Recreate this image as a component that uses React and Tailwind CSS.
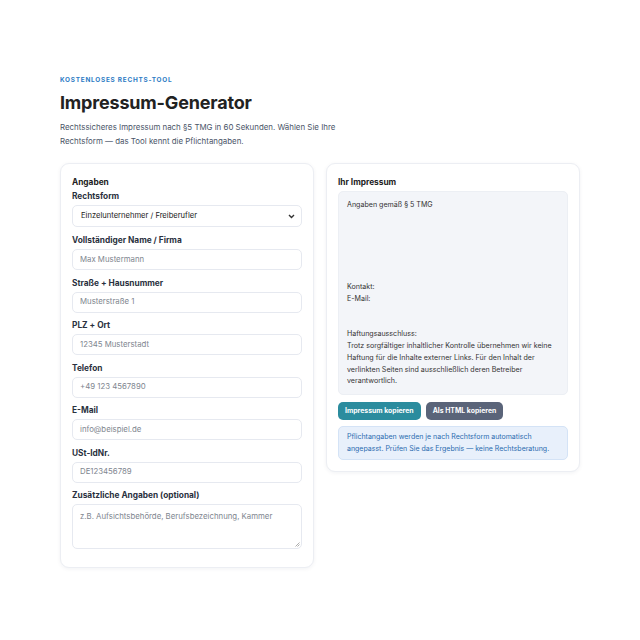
import React from "react";

const Field = ({ label, placeholder }) => (
  <div className="flex flex-col">
    <label className="text-[8.3px] font-bold text-[#2a3140] leading-[10px] mb-[4px]">{label}</label>
    <div className="h-[21px] rounded-[5px] border border-[#e6e9f0] bg-white flex items-center px-[7px] text-[7.8px] text-[#80868f]">
      {placeholder}
    </div>
  </div>
);

export default function App() {
  const pre = `Angaben gemäß § 5 TMG






Kontakt:
E-Mail:


Haftungsausschluss:
Trotz sorgfältiger inhaltlicher Kontrolle übernehmen wir keine Haftung für die Inhalte externer Links. Für den Inhalt der verlinkten Seiten sind ausschließlich deren Betreiber verantwortlich.`;
  return (
    <div className="min-h-[640px] bg-white" style={{ fontFamily: "Inter, 'Noto Sans', sans-serif" }}>
      <div className="w-[520px] ml-[60px] pt-[76px]">
        <div className="text-[6.4px] font-bold tracking-[0.12em] text-[#2b7bc4] leading-[9px]">KOSTENLOSES RECHTS-TOOL</div>
        <h1 className="mt-[6px] text-[18px] font-bold text-[#222] leading-[24px] tracking-[-0.01em]">Impressum-Generator</h1>
        <p className="mt-[5px] w-[290px] text-[7.9px] leading-[14px] text-[#4a5568]">
          Rechtssicheres Impressum nach §5 TMG in 60 Sekunden. Wählen Sie Ihre Rechtsform — das Tool kennt die Pflichtangaben.
        </p>
        <div className="mt-[15px] flex gap-[12px] items-start">
          <div className="w-[254px] rounded-[9px] border border-[#eceef3] bg-white shadow-[0_1px_4px_rgba(20,30,60,0.06)] px-[11px] pt-[12px] pb-[18px]">
            <h2 className="text-[8.3px] font-bold text-[#222] leading-[12px]">Angaben</h2>
            <div className="mt-[3px] flex flex-col">
              <label className="text-[8.3px] font-bold text-[#2a3140] leading-[10px] mb-[4px]">Rechtsform</label>
              <div className="h-[22px] rounded-[5px] border border-[#e6e9f0] bg-white flex items-center justify-between pl-[8px] pr-[6px] text-[7.6px] text-[#222]">
                <span>Einzelunternehmer / Freiberufler</span>
                <svg width="7" height="5" viewBox="0 0 7 5"><path d="M1 1l2.5 2.5L6 1" fill="none" stroke="#333" strokeWidth="1.4" /></svg>
              </div>
            </div>
            <div className="mt-[8px] flex flex-col gap-[7.5px]">
              <Field label="Vollständiger Name / Firma" placeholder="Max Mustermann" />
              <Field label="Straße + Hausnummer" placeholder="Musterstraße 1" />
              <Field label="PLZ + Ort" placeholder="12345 Musterstadt" />
              <Field label="Telefon" placeholder="+49 123 4567890" />
              <Field label="E-Mail" placeholder="info@beispiel.de" />
              <Field label="USt-IdNr." placeholder="DE123456789" />
              <div className="flex flex-col">
                <label className="text-[8.3px] font-bold text-[#2a3140] leading-[10px] mb-[4px]">Zusätzliche Angaben (optional)</label>
                <div className="relative h-[45px] rounded-[5px] border border-[#e6e9f0] bg-white px-[7px] pt-[5px] text-[7.8px] text-[#80868f] leading-[12px]">
                  z.B. Aufsichtsbehörde, Berufsbezeichnung, Kammer
                  <svg className="absolute right-[1px] bottom-[1px]" width="5" height="5" viewBox="0 0 5 5"><path d="M4.5 0.5L0.5 4.5M4.5 2.5L2.5 4.5" stroke="#999" strokeWidth="0.8" /></svg>
                </div>
              </div>
            </div>
          </div>
          <div className="w-[254px] rounded-[9px] border border-[#eceef3] bg-white shadow-[0_1px_4px_rgba(20,30,60,0.06)] px-[11px] pt-[12px] pb-[11px]">
            <h2 className="text-[8.3px] font-bold text-[#222] leading-[12px]">Ihr Impressum</h2>
            <div className="mt-[3px] rounded-[5px] bg-[#f3f5f9] border border-[#eceff4] px-[8px] pt-[7px] pb-[7px] text-[7.1px] leading-[11.75px] text-[#333] whitespace-pre-wrap">{pre}</div>
            <div className="mt-[7px] flex gap-[5px]">
              <button className="h-[18px] px-[7px] rounded-[5px] bg-[#2b8c9e] text-white text-[6.9px] font-bold">Impressum kopieren</button>
              <button className="h-[18px] px-[7px] rounded-[5px] bg-[#5a6479] text-white text-[6.9px] font-bold">Als HTML kopieren</button>
            </div>
            <div className="mt-[6px] rounded-[5px] bg-[#e8f0fb] border border-[#d4e3f6] px-[8px] py-[4px] text-[7px] leading-[12px] text-[#2b6cb0]">
              Pflichtangaben werden je nach Rechtsform automatisch angepasst. Prüfen Sie das Ergebnis — keine Rechtsberatung.
            </div>
          </div>
        </div>
      </div>
    </div>
  );
}
